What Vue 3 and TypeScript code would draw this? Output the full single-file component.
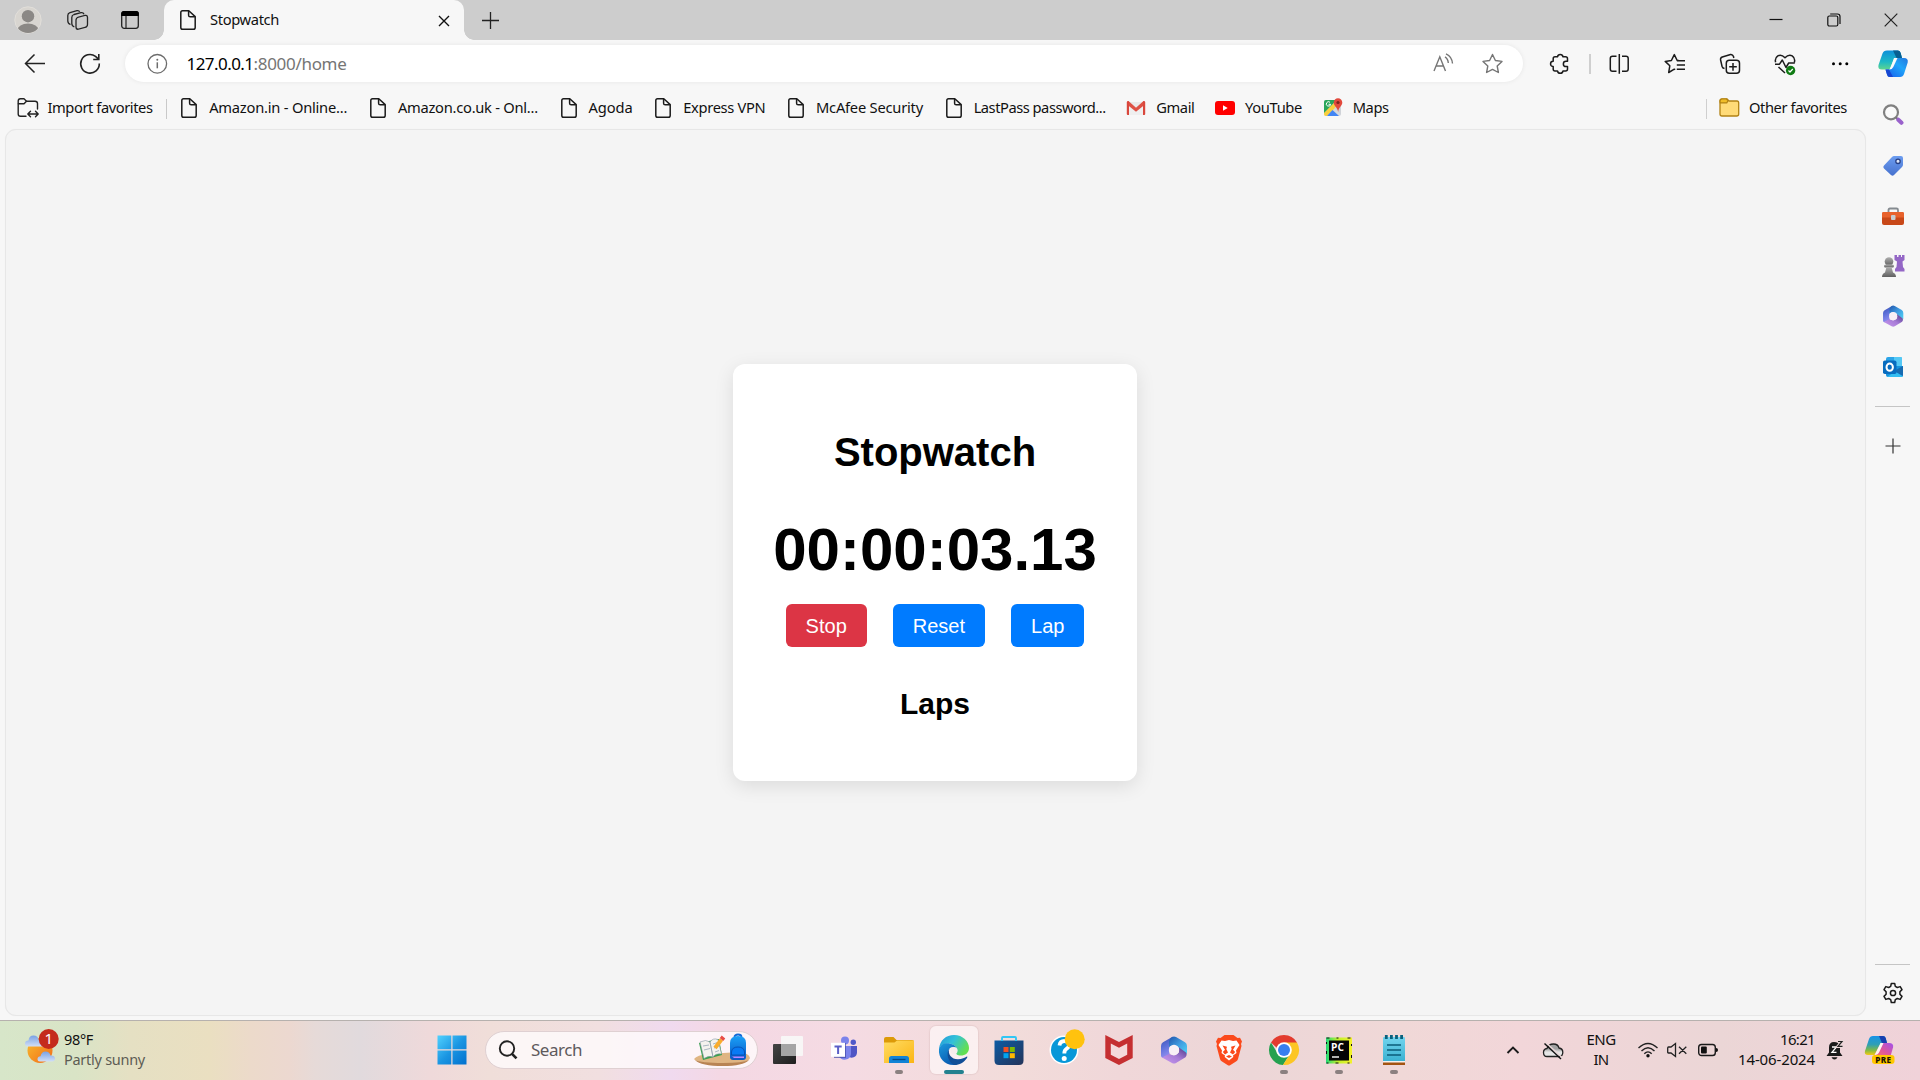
<script setup lang="ts">
import type { Directive } from 'vue'

interface Favorite {
  icon: string
  label: string
  width: number
}

interface TaskApp {
  icon: string
  state: string
}

// Tracks a label so that it takes exactly the given width in pixels.
const vFit: Directive<HTMLElement, number> = {
  mounted(el, { value }) {
    el.style.letterSpacing = '0px'
    const natural = el.getBoundingClientRect().width
    const count = (el.textContent ?? '').trim().length
    el.style.letterSpacing = `${((value - natural) / count).toFixed(3)}px`
  },
}

const favorites: Favorite[] = [
  { icon: 'doc', label: 'Amazon.in - Online...', width: 138 },
  { icon: 'doc', label: 'Amazon.co.uk - Onl...', width: 140 },
  { icon: 'doc', label: 'Agoda', width: 44 },
  { icon: 'doc', label: 'Express VPN', width: 82 },
  { icon: 'doc', label: 'McAfee Security', width: 107 },
  { icon: 'doc', label: 'LastPass password...', width: 132 },
  { icon: 'gmail', label: 'Gmail', width: 38 },
  { icon: 'youtube', label: 'YouTube', width: 57 },
  { icon: 'maps', label: 'Maps', width: 36 },
]

const sidebar: string[] = ['lens', 'tag', 'toolbox', 'games', 'm365', 'outlook']

const apps: TaskApp[] = [
  { icon: 'teams', state: '' },
  { icon: 'explorer', state: 'open' },
  { icon: 'edge', state: 'active' },
  { icon: 'store', state: '' },
  { icon: 'help', state: '' },
  { icon: 'mcafee', state: '' },
  { icon: 'office', state: '' },
  { icon: 'brave', state: '' },
  { icon: 'chrome', state: 'open' },
  { icon: 'pycharm', state: 'open' },
  { icon: 'notepad', state: 'open' },
]

const hexagon = (id: string): string => `
  <defs>
    <linearGradient id="${id}a" x1="0" y1="0" x2="0.3" y2="1"><stop offset="0" stop-color="#3a4fb0"/><stop offset=".5" stop-color="#5b6fd8"/><stop offset="1" stop-color="#8f8df0"/></linearGradient>
    <linearGradient id="${id}b" x1="0" y1="0" x2="1" y2="1"><stop offset="0" stop-color="#1f55ac"/><stop offset=".5" stop-color="#3f9be0"/><stop offset="1" stop-color="#4fd3f5"/></linearGradient>
    <linearGradient id="${id}c" x1="0" y1="1" x2="1" y2="0"><stop offset="0" stop-color="#c99af0"/><stop offset=".5" stop-color="#a77bd6"/><stop offset="1" stop-color="#4c3a88"/></linearGradient>
  </defs>
  <path d="M15 2.500 L5 8.300 Q3 9.400 3 12 V21.500 Q3 23.300 4.500 23.800 L11.500 21 V10.500 Q11.500 6 15 2.500Z" fill="url(#${id}a)"/>
  <path d="M14 3 Q16 1.800 18 3 L27 8.200 Q29 9.400 29 12 V20 L21 14 L16 10.800 L11 13 V8.500 Q11 5 14 3Z" fill="url(#${id}b)"/>
  <path d="M4 23.500 L11 20 L16 21.500 L21 18.500 V13.500 L28 18.500 Q29.500 20.500 27.500 23.300 L18 29 Q16 30 14 29Z" fill="url(#${id}c)"/>
  <circle cx="16" cy="16" r="5.200" fill="#f8f0f6"/>`

const art: Record<string, string> = {
  doc: `<g fill="none" stroke="#1b1b1b" stroke-width="1.500" stroke-linejoin="round"><path d="M6.500 2.800 H12.800 L19.200 8.600 V19.500 Q19.200 21.300 17.400 21.300 H6.600 Q4.800 21.300 4.800 19.500 V4.500 Q4.800 2.800 6.500 2.800Z"/><path d="M12.600 3 V7.200 Q12.600 8.800 14.200 8.800 H19"/></g>`,
  importer: `<g fill="none" stroke="#222" stroke-width="1.400" stroke-linejoin="round" stroke-linecap="round"><path d="M10 20.200 H4.500 Q2.200 20.200 2.200 18 V5 Q2.200 2.800 4.400 2.800 H8 L10.500 5.200 H19 Q21.500 5.200 21.500 7.600 V13"/><path d="M2.400 7.800 H8 L10.500 5.200 M12 18 H22 M14.500 15.300 L11.800 18 L14.500 20.700 M19.500 15.300 L22.200 18 L19.500 20.700"/></g>`,
  gmail: `<path d="M3 6 H21 V19 H3Z" fill="#e9e9e9"/><path d="M5 9.500 V19 H19 V9.500 L12 15Z" fill="#efefef"/><path d="M3 5.500 L4.500 5 L12 11.800 L19.500 5 L21 5.500 V8.500 L12 15.800 L3 8.500Z" fill="#de5145"/><path d="M2.800 6 Q3.500 5 5 5.500 V19 H3.800 Q2.800 19 2.800 18Z M21.200 6 Q20.500 5 19 5.500 V19 H20.200 Q21.200 19 21.200 18Z" fill="#d9473c"/>`,
  youtube: `<rect x="2" y="5" width="20" height="14" rx="3" fill="#f00"/><path d="M10 9.300 L14.700 12 L10 14.700Z" fill="#fff"/>`,
  maps: `<rect x="3" y="4" width="17" height="16" rx="2" fill="#d6d9dd"/><path d="M3 6 Q3 4 5 4 H16 L3 17.500Z" fill="#29a65a"/><path d="M3 17 L15 5 L18 8 L6 20 H5 Q3 20 3 18Z" fill="#f9cf3e"/><path d="M6 20 L11.500 14 L18 20Z" fill="#4285f4"/><path d="M13.500 12 L20 19 V8Z" fill="#d0d3d8"/><path d="M9 6.300 A2.200 2.200 0 1 0 9.700 8.300 H7.600" fill="none" stroke="#fff" stroke-width="1"/><path d="M17 2.200 A4.300 4.300 0 0 1 21.300 6.500 C21.300 10 17.500 11 17.200 16 C16.500 11 12.700 10 12.700 6.500 A4.300 4.300 0 0 1 17 2.200Z" fill="#e2493c"/><circle cx="17" cy="6.500" r="1.600" fill="#7c241c"/>`,
  lens: `<g transform="translate(4 4)"><circle cx="10" cy="9.300" r="7" fill="#fafafa" stroke="#808080" stroke-width="2.200"/><path d="M14.800 14.300 L17 16.500" stroke="#777" stroke-width="2"/><path d="M17.300 16.800 L20.500 19.700" stroke="#9a62cc" stroke-width="4.200" stroke-linecap="round"/></g>`,
  tag: `<defs><linearGradient id="tg" x1="0" y1="0" x2="0" y2="1"><stop offset="0" stop-color="#6c9df0"/><stop offset="1" stop-color="#4671ce"/></linearGradient></defs><path d="M17 6 H24 Q26 6 26 8 V14.500 Q26 16 25 17 L17 25 Q15.500 26.500 14 25 L7 18.500 Q5.500 17 7 15.500 L15 7 Q16 6 17 6Z" fill="url(#tg)"/><circle cx="21" cy="11.300" r="2.200" fill="#dce7fb" stroke="#273f83" stroke-width="1.300"/>`,
  toolbox: `<path d="M11.500 11.500 V9 Q11.500 7.500 13 7.500 H19.500 Q21 7.500 21 9 V11.500" fill="none" stroke="#858b90" stroke-width="1.800"/><rect x="5" y="11" width="22" height="13" rx="2" fill="#c84819"/><path d="M5 12.500 Q5 11 6.500 11 H25.500 Q27 11 27 12.500 V16.500 H5Z" fill="#e8622c"/><rect x="14" y="14" width="4.500" height="5" rx="1" fill="#c6cdd2"/>`,
  games: `<defs><linearGradient id="gm" x1="0" y1="0" x2="0" y2="1"><stop offset="0" stop-color="#b0b0b0"/><stop offset="1" stop-color="#606060"/></linearGradient></defs><path d="M17.500 5 H20 V7 H21.500 V5 H24 V7 H25 V5 H27.500 V10 L25.500 11.500 L26 17 L27.500 19 V21.500 H18 V19 L19.500 17 L20 11.500 L17.500 10Z" fill="#9467c6"/><g fill="url(#gm)"><circle cx="12" cy="11.500" r="4.300"/><rect x="7" y="14.500" width="10" height="3" rx="1.500"/><path d="M9.500 17 H14.500 L16 22.500 Q19 23.500 19 27 H5 Q5 23.500 8 22.500Z"/></g>`,
  m365: `<g transform="translate(3.700 3.700) scale(.78)">${hexagon('ms')}</g>`,
  outlook: `<path d="M9 8 Q9 6 11 6 H23 Q25 6 25 8 V16 H9Z" fill="#2ba4e8"/><path d="M17 6 H24 Q25 6 25 7 V16 H17Z" fill="#53c8f5"/><path d="M9 15 H26 V23.500 Q26 26 24 26 H11 Q9 26 9 24Z" fill="#1793dd"/><path d="M26 15 L17 20 L26 25Z" fill="#176bb1"/><path d="M10 26 L18 20.500 L26 25.500 Q25.500 26 24 26Z" fill="#34bdf2"/><rect x="6" y="9.500" width="13.500" height="13.500" rx="1.800" fill="#086cbf"/><ellipse cx="12.700" cy="16.200" rx="3.200" ry="3.600" fill="none" stroke="#fff" stroke-width="2"/>`,
  teams: `<circle cx="17" cy="6.500" r="4" fill="#7b83eb"/><circle cx="25.300" cy="8.300" r="2.700" fill="#5059c9"/><path d="M20 12 H29 V18.500 A5.200 5.200 0 0 1 20 22Z" fill="#4f55c5"/><path d="M11 12 H23 V20 A6.300 6.300 0 0 1 11 22Z" fill="#7b83eb"/><rect x="6" y="9" width="12" height="15" fill="#4148a7" opacity=".7"/><rect x="3" y="8.800" width="14" height="14" fill="#fff"/><path d="M6.500 12.500 H13.700 M10.100 12.500 V20" stroke="#5b5fc7" stroke-width="2"/>`,
  explorer: `<defs><linearGradient id="ex" x1="0" y1="0" x2="1" y2="1"><stop offset="0" stop-color="#ffdc63"/><stop offset="1" stop-color="#fbb514"/></linearGradient></defs><path d="M1 5 Q1 3 3 3 H10.500 L13.500 6 H29 Q31 6 31 8 V14 H1Z" fill="#dc9a08"/><path d="M1 8.500 H11.500 L14 6.500 H31 V29 H1Z" fill="url(#ex)"/><path d="M6 29 V24.500 Q6 22 8.500 22 H23.500 Q26 22 26 24.500 V29Z" fill="#1283d6"/><path d="M9.500 25.500 H22.500" stroke="#064a85" stroke-width="1.300"/>`,
  edge: `<defs><linearGradient id="ea" x1="0" y1="0" x2="1" y2=".5"><stop offset="0" stop-color="#2396d8"/><stop offset=".5" stop-color="#33c1d9"/><stop offset="1" stop-color="#62df52"/></linearGradient><linearGradient id="eb" x1="0" y1="0" x2=".5" y2="1"><stop offset="0" stop-color="#1c9add"/><stop offset="1" stop-color="#0a5cb1"/></linearGradient></defs><path d="M1 15 C2 6 8 1 16 1 C25 1 31 7.500 31 14 C31 19 27 21.500 23 21.500 C19 21.500 17.500 20 18.500 18.500 C20 16 19 12.500 14.500 10.500 C9 8.300 3 10 1 15Z" fill="url(#ea)"/><path d="M1 15 C2.500 10.500 7 8.500 12 9.700 C18 11 20 14.500 18.500 18.200 C18.500 13.500 14 11.700 11.500 14.500 C8 18.500 12 28.500 18.500 30.700 C8 32.500 0 25 1 15Z" fill="url(#eb)"/><path d="M11.500 14.500 C9 20 14 25.500 20 25.300 C24 25.200 27 23.500 28.500 22.700 C29.300 22.300 29.700 23 29 24 C26 28.500 21.500 31 16.500 31 C10 28.500 7.500 19 11.500 14.500Z" fill="#114f97"/><circle cx="16" cy="16.500" r="3.600" fill="#f6edec"/>`,
  store: `<defs><linearGradient id="st" x1="0" y1="0" x2="1" y2="1"><stop offset="0" stop-color="#0c5ba4"/><stop offset="1" stop-color="#243459"/></linearGradient></defs><path d="M1.500 6.500 H30.500 V26.500 Q30.500 31 26 31 H6 Q1.500 31 1.500 26.500Z" fill="url(#st)"/><path d="M9 7 V4 Q9 3 10 3 H22 Q23 3 23 4 V7" fill="none" stroke="#32c6f4" stroke-width="1.900"/><path d="M10.500 13 H15.500 V18 H10.500Z" fill="#f25022"/><path d="M16.800 13 H21.800 V18 H16.800Z" fill="#7fba00"/><path d="M10.500 19.200 H15.500 V24.200 H10.500Z" fill="#00a4ef"/><path d="M16.800 19.200 H21.800 V24.200 H16.800Z" fill="#ffb900"/>`,
  help: `<circle cx="16" cy="16" r="14.500" fill="#fff"/><circle cx="16" cy="16" r="13" fill="#0797d8"/><path d="M11.500 11.500 Q12 7 16.500 7 Q21 7 21 11 Q21 13.300 18.500 14.800 Q16.300 16.300 16.300 19.500" fill="none" stroke="#fff" stroke-width="3.800"/><circle cx="16.200" cy="24.500" r="2.500" fill="#fff"/><circle cx="26.700" cy="5.200" r="10" fill="#ffc20e"/>`,
  mcafee: `<path d="M2.300 1 L16 8 L29.700 1 V24 L16 31 L2.300 24Z" fill="#c52f31"/><path d="M7.800 9.500 L16 13.800 L24.200 9.500 V20.700 L16 25 L7.800 20.700Z" fill="#f4d9da"/>`,
  office: hexagon('mt'),
  brave: `<path d="M7.500 4 L11.500 1 H20.500 L24.500 4 L27 3.800 L29 7.500 L28 10 L28.500 12 L25 25 Q24.500 26.500 23 27.500 L17.500 31 Q16 32 14.500 31 L9 27.500 Q7.500 26.500 7 25 L3.500 12 L4 10 L3 7.500 L5 3.800Z" fill="#fb4a1c"/><path d="M8.500 6.500 L12 7 L16 6 L20 7 L23.500 6.500 L26.500 11 L23 16.500 L23.500 19 L20 21.500 L20.300 23 L16 26.500 L11.700 23 L12 21.500 L8.500 19 L9 16.500 L5.500 11Z" fill="#fff"/><path d="M9.500 11.500 L14 12.700 L13.300 15 L15 18.500 L12 20.500 L9.800 18 L12 15.800Z M22.500 11.500 L18 12.700 L18.700 15 L17 18.500 L20 20.500 L22.200 18 L20 15.800Z M13 22.500 L16 21 L19 22.500 L16 24Z" fill="#fb4a1c"/>`,
  chrome: `<path d="M3 8.500 A15 15 0 0 1 29 8.500 L22 16 L16 9 L9 14Z" fill="#e33b2e"/><path d="M3 8.500 A15 15 0 0 0 15 31 L22.300 19.500 L16 23 L9.700 19.500Z" fill="#25a150"/><path d="M29 8.500 A15 15 0 0 1 15 31 L22.300 19.500 V12 L16 8.500Z" fill="#fcc624"/><circle cx="16" cy="16" r="7.800" fill="#fff"/><circle cx="16" cy="16" r="6" fill="#377fee"/>`,
  pycharm: `<defs><linearGradient id="py" x1="0" y1="0" x2="1" y2="0"><stop offset="0" stop-color="#20d978"/><stop offset=".45" stop-color="#bff02b"/><stop offset="1" stop-color="#f4f12b"/></linearGradient></defs><rect x="3" y="3.500" width="26" height="26" fill="url(#py)"/><path d="M3.500 4 H28.500 V29 H3.500Z" fill="none" stroke="#111" stroke-width="1" stroke-dasharray="3 7 2 9"/><rect x="6" y="6.500" width="20" height="20" fill="#050505"/><path d="M9 23 H16" stroke="#fff" stroke-width="1.400"/><text x="8" y="16.700" font-family="Open Sans, Noto Sans, sans-serif" font-weight="700" font-size="10.200" fill="#fff">PC</text>`,
  notepad: `<defs><linearGradient id="np" x1="0" y1="0" x2="0" y2="1"><stop offset="0" stop-color="#73d4ee"/><stop offset="1" stop-color="#3bb2d2"/></linearGradient></defs><rect x="5" y="27" width="22" height="4" fill="#a35311"/><rect x="5" y="25" width="22" height="3.500" fill="#f4f0ee"/><path d="M5 4 Q5 3 6 3 H26 Q27 3 27 4 V27 H5Z" fill="url(#np)"/><path d="M9 11 H23 M9 16 H23 M9 21 H23" stroke="#0b5c79" stroke-width="1.600"/><path d="M8.300 1 V5 M13.400 1 V5 M18.500 1 V5 M23.600 1 V5" stroke="#09617d" stroke-width="2.800"/>`,
}
</script>

<template>
  <div class="screen">
    <header class="titlebar">
      <svg class="avatar" width="28" height="28" viewBox="0 0 28 28">
        <defs><clipPath id="av"><circle cx="14" cy="14" r="13" /></clipPath></defs>
        <circle cx="14" cy="14" r="13.2" fill="#d8d5d0" stroke="#e2dfda" stroke-width="1" />
        <g clip-path="url(#av)" fill="#8b8885"><circle cx="14" cy="10.2" r="6.2" /><ellipse cx="14" cy="24" rx="10.500" ry="6.500" /></g>
      </svg>
      <svg class="spaces" width="24" height="24" viewBox="0 0 24 24" fill="none" stroke="#242424" stroke-width="1.300" stroke-linejoin="round">
        <rect x="10" y="8" width="11.500" height="12" rx="2.500" transform="skewY(-14) translate(0 4.200)" />
        <path d="M8.300 18.800 Q5.800 18 5.800 15.500 V9.500 Q5.800 7.200 8 6.500 L15 4.600 Q17.300 4.200 18 6.200" />
        <path d="M4.500 16.500 Q1.800 15.500 1.800 13 V7.500 Q1.800 5.300 4 4.600 L11 2.600 Q13 2.300 13.700 3.700" />
      </svg>
      <svg class="tabmenu" width="24" height="24" viewBox="0 0 24 24">
        <rect x="3.700" y="3.700" width="16.600" height="16.600" rx="2.500" fill="none" stroke="#222" stroke-width="1.300" />
        <path d="M3.200 8 V5.500 Q3.200 3 5.700 3 H18.300 Q20.800 3 20.800 5.500 V8Z" fill="#000" /><path d="M8 8 V20" stroke="#222" stroke-width="1.200" />
      </svg>
      <div class="tab">
        <svg width="24" height="24" viewBox="0 0 24 24" v-html="art.doc"></svg>
        <span class="label" v-fit="69">Stopwatch</span>
        <svg class="tabclose" width="12" height="12" viewBox="0 0 12 12"><path d="M1 1 L11 11 M11 1 L1 11" stroke="#111" stroke-width="1.400" /></svg>
      </div>
      <svg class="newtab" width="19" height="19" viewBox="0 0 19 19"><path d="M9.500 1 V18 M1 9.500 H18" stroke="#222" stroke-width="1.300" /></svg>
      <div class="winbtns">
        <svg width="14" height="14" viewBox="0 0 14 14"><path d="M.5 6.500 H13.500" stroke="#111" stroke-width="1.200" /></svg>
        <svg width="14" height="14" viewBox="0 0 14 14" fill="none" stroke="#111" stroke-width="1.200"><rect x=".8" y="3" width="10" height="10" rx="1.500" /><path d="M3.200 1 H10.500 Q13 1 13 3.500 V11" /></svg>
        <svg width="14" height="14" viewBox="0 0 14 14"><path d="M.7 .7 L13.300 13.300 M13.300 .7 L.7 13.300" stroke="#222" stroke-width="1.200" /></svg>
      </div>
    </header>

    <nav class="toolbar">
      <svg class="back" width="24" height="24" viewBox="0 0 24 24" fill="none" stroke="#222" stroke-width="1.500"><path d="M22 11.500 H2.500 M11.500 2.500 L2.500 11.500 L11.500 20.500" /></svg>
      <svg class="reload" width="24" height="24" viewBox="0 0 24 24" fill="none" stroke="#222" stroke-width="1.600"><path d="M21.300 11.500 A9.300 9.300 0 1 1 17.500 4.300 L20.600 7.200 M20.800 2 V7.500 H15.200" /></svg>
      <div class="address">
        <svg width="24" height="24" viewBox="0 0 24 24"><circle cx="12.300" cy="11.800" r="9.300" fill="none" stroke="#6c6c6c" stroke-width="1.300" /><path d="M12.300 10.300 V16.300" stroke="#6c6c6c" stroke-width="1.500" /><circle cx="12.300" cy="7.800" r="1" fill="#6c6c6c" /></svg>
        <span class="url"><span v-fit="67">127.0.0.1</span><span class="dim" v-fit="93">:8000/home</span></span>
        <svg class="read" width="24" height="24" viewBox="0 0 24 24" fill="none" stroke="#757575" stroke-width="1.400"><path d="M3 19 L8.800 4.800 L14.500 19 M5 14 H12.700 M14 4.800 Q17 6.500 17.300 11 M15 1.800 Q21 4.500 21.500 11.500" /></svg>
        <svg class="star" width="24" height="24" viewBox="0 0 24 24" fill="none" stroke="#757575" stroke-width="1.400" stroke-linejoin="round"><path d="M12.500 2.500 L15.400 8.500 L22 9.400 L17.200 14 L18.400 20.500 L12.500 17.400 L6.600 20.500 L7.800 14 L3 9.400 L9.600 8.500Z" /></svg>
      </div>
      <svg class="ext" width="24" height="24" viewBox="0 0 24 24" fill="none" stroke="#1b1b1b" stroke-width="1.500" stroke-linejoin="round"><path d="M9.500 4.800 A2.800 2.800 0 0 1 15 4.800 H17.500 Q19.500 4.800 19.500 6.800 V9.300 H18 A2.600 2.600 0 0 0 18 14.600 H19.500 V17 Q19.500 19 17.500 19 H15 A2.800 2.800 0 0 1 9.500 19 H7 Q5.200 19 5.200 17 V14.600 A2.600 2.600 0 0 1 5.200 9.300 V6.800 Q5.200 4.800 7 4.800Z" /></svg>
      <i class="bar"></i>
      <svg class="split" width="24" height="24" viewBox="0 0 24 24" fill="none" stroke="#1b1b1b" stroke-width="1.500"><path d="M12.300 2 V21.700 M9.500 4.200 H5.500 Q3.300 4.200 3.300 6.400 V17 Q3.300 19.300 5.500 19.300 H9.500 M15 4.200 H19 Q21.200 4.200 21.200 6.400 V17 Q21.200 19.300 19 19.300 H15" /></svg>
      <svg class="favs" width="24" height="24" viewBox="0 0 24 24" fill="none" stroke="#1b1b1b" stroke-width="1.500" stroke-linejoin="round"><path d="M15.800 8.500 H14.200 L11.300 2.600 L8.400 8.500 L2.200 9.400 L6.800 13.800 L5.700 20.500 L11.300 17.200 L12.200 17.700 M13.800 8.700 H22 M13.800 13 H22 M13.800 17.300 H22" /></svg>
      <svg class="coll" width="24" height="24" viewBox="0 0 24 24" fill="none" stroke="#1b1b1b" stroke-width="1.500"><rect x="8.300" y="8.300" width="13.200" height="13" rx="3" /><path d="M15 11 V18.700 M11.200 14.800 H18.800 M6.500 16.500 Q4.500 16.200 4 14.200 L2.600 8 Q2.200 5.800 4.300 5 L12.500 2.500 Q14.700 2.200 15.500 4.500 L15.800 6" /></svg>
      <svg class="heart" width="24" height="24" viewBox="0 0 24 24" fill="none" stroke="#1b1b1b" stroke-width="1.500" stroke-linejoin="round"><path d="M2.600 10.300 Q1.500 6 4.800 3.800 Q8.500 2 12 5.800 Q15.500 2 19.200 3.800 Q22.500 6 21.400 10.300 M2 12.200 H6.500 L9.300 8 L13 15.500 L15.700 11 H21.800 M5.500 15 L12 21" /><circle cx="17.600" cy="18.500" r="4.700" fill="#0f7b13" stroke="none" /><path d="M15.500 18.500 L17 20 L19.800 17" stroke="#fff" stroke-width="1.200" /></svg>
      <svg class="more" width="24" height="24" viewBox="0 0 24 24"><circle cx="5.500" cy="11.700" r="1.500" /><circle cx="12.200" cy="11.700" r="1.500" /><circle cx="18.800" cy="11.700" r="1.500" /></svg>
      <svg class="copilot" width="32" height="32" viewBox="0 0 32 32">
        <defs>
          <linearGradient id="cpa" x1="0" y1="0" x2="0" y2="1"><stop offset="0" stop-color="#0d8fd9" /><stop offset=".6" stop-color="#1eb9c5" /><stop offset="1" stop-color="#5ed58e" /></linearGradient>
          <linearGradient id="cpb" x1="0" y1="1" x2="1" y2="0"><stop offset="0" stop-color="#165bea" /><stop offset=".6" stop-color="#20a5fa" /><stop offset="1" stop-color="#2476dc" /></linearGradient>
        </defs>
        <path d="M14 2.500 H21 Q23 2.500 23.700 5 L25 10 H17 L13 21.500 H5 Q.5 21.500 1.500 17 L5.500 5.500 Q6.500 2.500 10 2.500Z" fill="url(#cpa)" />
        <path d="M16 2.500 H21 Q23 2.500 23.700 5 L25 10 H19.500Z" fill="#075f91" />
        <path d="M19 10 H27 Q31.500 10 30.700 14.500 L27 26 Q26 29 23 29 H13 Q10.500 29 10 26.500 L8.500 21.500 H11.500 Q14.500 21.500 15.500 18Z" fill="url(#cpb)" />
        <path d="M8.500 21.500 H12 L16 29 H13 Q10.500 29 10 26.500Z" fill="#1747d1" /><path d="M17.500 10 H20.500 L16.300 19 Q15 21.500 12.500 21.500Z" fill="#fafafa" />
      </svg>
    </nav>

    <div class="middle">
      <div class="content">
        <div class="favorites">
          <div class="fav"><svg width="24" height="24" viewBox="0 0 24 24" v-html="art.importer"></svg><span v-fit="105">Import favorites</span></div>
          <i class="favsep"></i>
          <div v-for="f in favorites" :key="f.label" class="fav">
            <svg width="24" height="24" viewBox="0 0 24 24" v-html="art[f.icon]"></svg><span v-fit="f.width">{{ f.label }}</span>
          </div>
          <div class="others">
            <svg width="24" height="24" viewBox="0 0 24 24"><path d="M3 5 Q3 2.800 5 2.800 H10 L12 5 H20 Q21.700 5 21.700 7 V18 Q21.700 20 19.700 20 H5 Q3 20 3 18Z" fill="#ffdb78" stroke="#b28314" stroke-width="1.300" /><path d="M3 5.500 Q3 3 5 3 H9.500 L11 4.700 L9.800 6.900 H3.300Z" fill="#f0bd28" stroke="#b28314" stroke-width="1.200" /></svg>
            <span v-fit="98">Other favorites</span>
          </div>
        </div>
        <main class="page">
          <section class="card">
            <h1>Stopwatch</h1>
            <div class="time">00:00:03.13</div>
            <div class="actions"><button class="stop">Stop</button><button>Reset</button><button>Lap</button></div>
            <h2>Laps</h2>
          </section>
        </main>
      </div>
      <aside class="sidebar">
        <div v-for="s in sidebar" :key="s" class="slot"><svg width="32" height="32" viewBox="0 0 32 32" v-html="art[s]"></svg></div>
        <i class="line first"></i>
        <svg class="add" width="16" height="16" viewBox="0 0 16 16"><path d="M8 .5 V15.500 M.5 8 H15.500" stroke="#333" stroke-width="1.200" /></svg>
        <i class="line last"></i>
        <svg class="gear" width="24" height="24" viewBox="0 0 24 24" fill="none" stroke="#1b1b1b" stroke-width="1.500" stroke-linejoin="round"><path d="M10.300 2.500 H13.700 L14.300 5.400 L16.300 6.500 L19.200 5.600 L21 8.600 L18.900 10.700 V13.300 L21 15.400 L19.200 18.400 L16.300 17.500 L14.300 18.600 L13.700 21.500 H10.300 L9.700 18.600 L7.700 17.500 L4.800 18.400 L3 15.400 L5.100 13.300 V10.700 L3 8.600 L4.800 5.600 L7.700 6.500 L9.700 5.400Z" /><circle cx="12" cy="12" r="2.600" /></svg>
      </aside>
    </div>

    <footer class="taskbar">
      <div class="weather">
        <svg width="38" height="38" viewBox="0 0 38 38">
          <defs><linearGradient id="sun" x1="0" y1="0" x2="1" y2="1"><stop offset="0" stop-color="#f8bd31" /><stop offset="1" stop-color="#f26b16" /></linearGradient><linearGradient id="cl" x1="0" y1="0" x2="0" y2="1"><stop offset="0" stop-color="#79a2e4" /><stop offset="1" stop-color="#d2dff7" /></linearGradient></defs>
          <circle cx="17" cy="21.500" r="12.500" fill="url(#sun)" />
          <path d="M5 17.500 Q2 17.500 2 14.500 Q2 11.500 5.500 11.500 Q6 6.500 10.500 6.500 Q15 6.500 16 11.500 L20 13.500 V17.500Z" fill="url(#cl)" />
          <path d="M17 32.500 Q14.500 32.500 14.500 30 Q14.500 27.500 17.500 27.200 Q18.500 22.500 22.500 22.500 Q26.500 22.500 27.500 26.500 Q32 26.500 32 29.500 Q32 32.500 29 32.500Z" fill="url(#cl)" />
          <circle cx="25.700" cy="10" r="10" fill="#c42b1c" />
          <text x="25.900" y="15.400" text-anchor="middle" font-family="Noto Sans, sans-serif" font-size="15" fill="#fff">1</text>
        </svg>
        <div class="wtext"><span v-fit="29">98°F</span><span class="soft" v-fit="81">Partly sunny</span></div>
      </div>
      <svg class="start" width="30" height="30" viewBox="0 0 30 30"><defs><linearGradient id="win" gradientUnits="userSpaceOnUse" x1="0" y1="0" x2="28" y2="28"><stop offset="0" stop-color="#53d3ff" /><stop offset=".55" stop-color="#1a95e2" /><stop offset="1" stop-color="#0474d0" /></linearGradient></defs><path d="M.5 .5 H14.300 V14.300 H.5Z M15.500 .5 H29.500 V14.300 H15.500Z M.5 15.500 H14.300 V29.500 H.5Z M15.500 15.500 H29.500 V29.500 H15.500Z" fill="url(#win)" /></svg>
      <div class="search">
        <svg width="20" height="20" viewBox="0 0 20 20"><circle cx="9" cy="8.500" r="7.200" fill="none" stroke="#222" stroke-width="1.900" /><path d="M14 13.800 L18.500 18.300" stroke="#222" stroke-width="2.600" /></svg>
        <span v-fit="51">Search</span>
        <svg class="school" width="58" height="34" viewBox="0 0 58 34">
          <defs><linearGradient id="bp" x1="0" y1="0" x2="0" y2="1"><stop offset="0" stop-color="#1aa0f7" /><stop offset="1" stop-color="#0a56c5" /></linearGradient></defs>
          <path d="M1 26 Q4 22 15 21 L46 19 Q56 20 57 25 Q55 31 30 31 Q5 31 1 26Z" fill="#dfb583" /><path d="M2 27 Q8 33 30 33 Q50 33 56 27 Q50 30 30 30 Q8 30 2 27Z" fill="#b88454" />
          <path d="M6 10 L26 6 L29 22 L10 27Z" fill="#36a04c" /><path d="M7 9 Q13 6 17 9 L20 24 Q16 22 11 25.500Z M17 9 Q20 4.500 25 6.500 L28.500 21 Q23 20 20 24Z" fill="#f4f2ee" stroke="#8797a5" stroke-width=".6" />
          <path d="M10 13 L16 12 M11 17 L17 15.500 M20 11 L24.500 9.500 M21 15 L25.500 13.500 M22 19 L26 17.500" stroke="#a9b6c2" stroke-width="1" /><path d="M22 15 L28.500 6.500" stroke="#f9ac2e" stroke-width="4" /><path d="M28.500 6.500 L30.500 4" stroke="#e84c45" stroke-width="4.500" />
          <path d="M41.500 4 Q41.500 1.500 45 1.500 Q48.500 1.500 48.500 4" fill="none" stroke="#126bd7" stroke-width="1.800" /><path d="M37 10 Q37 3 45 3 Q53 3 53 10 V24 Q53 27 50 27 H40 Q37 27 37 24Z" fill="url(#bp)" /><path d="M38.500 22 V19 Q39 14 45 14 Q51 14 51.500 19 V22Z" fill="#087af4" stroke="#0647a6" stroke-width=".8" /><path d="M39 23.500 H51 V25 H41Z" fill="#b987ff" />
        </svg>
      </div>
      <svg class="tasks" width="32" height="32" viewBox="0 0 32 32"><defs><linearGradient id="tv" x1="0" y1="0" x2="1" y2="1"><stop offset="0" stop-color="#444" /><stop offset="1" stop-color="#1e1e1e" /></linearGradient></defs><rect x="1" y="10" width="23" height="20" rx="1" fill="url(#tv)" /><rect x="9" y="2" width="22" height="20" rx="1" fill="#f7f7f7" opacity=".93" /><path d="M9 10 H24 V22 H9Z" fill="#a5a5a5" /></svg>
      <div class="apps">
        <div v-for="a in apps" :key="a.icon" class="app" :class="a.state">
          <svg width="32" height="32" viewBox="0 0 32 32" v-html="art[a.icon]"></svg>
        </div>
      </div>
      <div class="tray">
        <svg class="chev" width="14" height="10" viewBox="0 0 14 10"><path d="M1.500 8 L7 2.500 L12.500 8" fill="none" stroke="#1b1b1b" stroke-width="1.900" /></svg>
        <svg class="cloud" width="24" height="20" viewBox="0 0 24 20"><defs><linearGradient id="oc" x1="0" y1="0" x2="0" y2="1"><stop offset=".4" stop-color="#a2a2a2" /><stop offset=".65" stop-color="#e6e6e6" /></linearGradient></defs><path d="M6 16.500 Q2.500 16.500 2.500 12.500 Q2.500 9 6 8.500 Q7.500 4 12.500 4 Q17 4 18 8 Q21.800 8.500 21.800 12.300 Q21.800 16.500 18 16.500Z" fill="url(#oc)" stroke="#222" stroke-width="1.300" /><path d="M4.800 2.500 L21.500 18" stroke="#ead7d8" stroke-width="1.600" /><path d="M3.500 3.500 L20 19" stroke="#111" stroke-width="1.400" /></svg>
        <div class="lang"><span v-fit="29">ENG</span><span v-fit="15">IN</span></div>
        <svg class="wifi" width="22" height="18" viewBox="0 0 22 18" fill="none" stroke="#222" stroke-width="1.400"><path d="M1.500 7 Q11 -2 20.500 7 M4.500 10 Q11 3.500 17.500 10 M7.300 12.700 Q11 9 14.700 12.700" /><circle cx="11" cy="14.700" r="1.700" fill="#111" stroke="none" /></svg>
        <svg class="sound" width="22" height="18" viewBox="0 0 22 18" fill="none" stroke="#222" stroke-width="1.300"><path d="M2.500 6 H5 L9.500 2.500 V15.500 L5 12 H2.500 Q1.700 12 1.700 11 V7 Q1.700 6 2.500 6Z M13 5.700 L20.300 12.700 M20.300 5.700 L13 12.700" /></svg>
        <svg class="battery" width="22" height="18" viewBox="0 0 22 18"><rect x="1.700" y="3.500" width="16.600" height="11" rx="2.800" fill="none" stroke="#1b1b1b" stroke-width="1.400" /><rect x="4" y="5.500" width="5.800" height="7" rx="1" fill="#111" /><path d="M19 7 Q21 7 21 9 Q21 11 19 11Z" fill="#111" /></svg>
        <div class="clock"><span v-fit="35">16:21</span><span v-fit="77">14-06-2024</span></div>
        <svg class="bell" width="20" height="22" viewBox="0 0 20 22"><path d="M1.500 17 L4 13.500 V8.500 Q4 3 9 3 Q14 3 15 7 V13.500 L17.500 17Z" fill="#1b1b1b" /><path d="M6.500 18.300 H12.500 Q11.500 20.500 9.500 20.500 Q7.500 20.500 6.500 18.300Z" fill="#1b1b1b" /><path d="M7 8 H11.500 L7 13.300 H11.500" fill="none" stroke="#fff" stroke-width="1.300" /><path d="M13 2.500 H17 L13 7.300 H17.500" fill="none" stroke="#ead7d8" stroke-width="3.200" /><path d="M13 2.500 H17 L13 7.300 H17.500" fill="none" stroke="#222" stroke-width="1.200" /></svg>
        <svg class="pre" width="32" height="32" viewBox="0 0 32 32">
          <defs><linearGradient id="pa" x1="0" y1="0" x2="0" y2="1"><stop offset="0" stop-color="#1693e8" /><stop offset=".45" stop-color="#2f9fb5" /><stop offset=".75" stop-color="#7fba45" /><stop offset="1" stop-color="#f6ca13" /></linearGradient><linearGradient id="pb" x1="0" y1="1" x2="1" y2="0"><stop offset="0" stop-color="#fb7c63" /><stop offset=".5" stop-color="#df569a" /><stop offset="1" stop-color="#a152ed" /></linearGradient></defs>
          <path d="M10 2 H20 Q22 2 22.700 4 L24 9 H18 L13 21 H5 Q1 21 2 17 L6 5 Q7 2 10 2Z" fill="url(#pa)" /><path d="M16 2 H20 Q22 2 22.700 4 L24 9 H19Z" fill="#173faf" /><path d="M18 9 H26 Q31 9 30 13.500 L27 24 H10 L12 20Z" fill="url(#pb)" /><path d="M17.500 9 H20.500 L16.300 18 Q15 21 11.500 21Z" fill="#fff4f2" />
          <rect x="9" y="21" width="22.500" height="9" rx="3" fill="#ffc800" /><text x="20.300" y="28.600" text-anchor="middle" font-family="Noto Sans, sans-serif" font-size="8.200" font-weight="800" fill="#1a1400" letter-spacing=".4">PRE</text>
        </svg>
      </div>
    </footer>
  </div>
</template>

<style>
body { margin: 0; overflow: hidden; }
</style>

<style scoped>
.screen { width: 1920px; height: 1080px; display: flex; flex-direction: column; background: #f7f7f7; color: #111; font-family: "Noto Sans", "Open Sans", sans-serif; font-size: 14.700px; overflow: hidden; }
svg { display: block; flex: none; overflow: visible; }
span { white-space: nowrap; }

.titlebar { height: 40px; flex: none; background: #cdcdcd; display: flex; align-items: center; padding-left: 14px; }
.spaces { margin-left: 24px; }
.tabmenu { margin-left: 28px; }
.tab { position: relative; width: 300px; height: 40px; margin-left: 22px; box-sizing: border-box; padding-left: 12px; display: flex; align-items: center; background: #f7f7f7; border-radius: 10px 10px 0 0; }
.tab::before, .tab::after { content: ""; position: absolute; bottom: 0; width: 10px; height: 10px; }
.tab::before { left: -10px; background: radial-gradient(circle at 0 0, transparent 9.5px, #f7f7f7 10px); }
.tab::after { right: -10px; background: radial-gradient(circle at 100% 0, transparent 9.5px, #f7f7f7 10px); }
.tab .label { margin-left: 10px; line-height: 38px; height: 40px; }
.tabclose { margin: 1px 14px 0 auto; }
.newtab { margin-left: 17px; }
.winbtns { margin-left: auto; display: flex; gap: 43.500px; padding-right: 22px; }

.toolbar { height: 48px; flex: none; display: flex; align-items: center; padding-left: 23px; }
.reload { margin-left: 31px; }
.address { width: 1398px; height: 37px; box-sizing: border-box; margin: -1px 0 0 23px; padding: 0 19px 0 20px; border-radius: 19px; background: #fff; box-shadow: 0 0 5px rgba(0, 0, 0, 0.07); display: flex; align-items: center; }
.url { margin-left: 17.500px; display: flex; font-size: 17px; line-height: 36px; color: #000; }
.dim { color: #757575; }
.read { margin-left: auto; }
.star { margin-left: 25px; }
.ext { margin-left: 25px; }
.bar { width: 2px; height: 20px; margin-left: 17px; background: #cfcfcf; }
.split { margin-left: 16px; }
.favs { margin-left: 32px; }
.coll, .heart, .more { margin-left: 31px; }
.copilot { margin-left: 25px; }

.middle { flex: 1; display: flex; min-height: 0; }
.content { width: 1866px; flex: none; display: flex; flex-direction: column; }
.favorites { height: 41px; flex: none; display: flex; align-items: center; padding: 0 19px 0 16px; }
.fav { display: flex; align-items: center; height: 41px; margin-right: 18.700px; }
.fav svg, .others svg { margin-top: -1px; }
.fav span, .others span { margin-left: 8px; line-height: 36px; height: 40px; }
.fav:first-child span { margin-left: 7.500px; }
.favsep { width: 1px; height: 20px; margin: 0 10.500px 0 -5.500px; background: #c9c9c9; }
.others { margin-left: auto; height: 20px; display: flex; align-items: center; border-left: 1px solid #cfcfcf; padding-left: 10px; }
.page { width: 1861px; height: 887px; margin-left: 5px; box-sizing: border-box; border: 1px solid #e7e7e7; border-radius: 11px; background: #f4f4f4; box-shadow: 0 0 1px rgba(0, 0, 0, 0.06); display: flex; align-items: center; justify-content: center; }

.card { width: 404px; height: 417px; box-sizing: border-box; margin-right: 1px; padding-top: 65px; background: #fff; border-radius: 12px; box-shadow: 0 5px 19px rgba(0, 0, 0, 0.1); display: flex; flex-direction: column; align-items: center; color: #000; font-family: "Liberation Sans", Arial, sans-serif; }
h1 { margin: 0; font-size: 40px; line-height: 46px; }
.time { margin-top: 40px; font-size: 60px; line-height: 70px; font-weight: 700; }
.actions { margin-top: 19px; display: flex; gap: 26px; }
button { height: 43px; padding: 0 20px; border: 0; border-radius: 6px; background: #007bff; color: #fff; font: 20px/42px "Liberation Sans", Arial, sans-serif; }
.stop { background: #dc3545; }
h2 { margin: 40px 0 0; font-size: 30px; line-height: 34px; }

.sidebar { flex: 1; display: flex; flex-direction: column; align-items: center; padding: 2px 1px 0 0; }
.slot { height: 50.300px; display: flex; align-items: center; }
.slot:nth-child(2) svg { margin-top: 2px; }
.slot:nth-child(3) svg { margin-top: 3px; }
.line { width: 35px; height: 1px; background: #c5c5c5; }
.first { margin-top: 14px; }
.add { margin-top: 31px; }
.last { margin-top: auto; }
.gear { margin: 16px 0 15px; }

.taskbar { height: 60px; flex: none; box-sizing: border-box; border-top: 1px solid #b6b1ae; padding-bottom: 1px; display: flex; align-items: center; background: linear-gradient(90deg, #d7e6c9 0, #d9e4c6 75px, #e5e0c3 130px, #eadfc1 210px, #ecdaca 250px, #ecd8d0 290px, #e6dad8 315px, #e1dadd 360px, #efd9da 430px, #f0ded9 490px, #f1dfe0 600px, #f0daef 670px, #f4d8e4 720px, #f5dbe3 850px, #f2dcda 1010px, #f0d7d9 1120px, #ecd6d7 1250px, #f0d8d7 1400px, #f2d6d9 1520px, #ebd6d6 1720px, #f0d2d9 1920px); }
.weather { width: 437px; flex: none; box-sizing: border-box; padding-left: 23px; display: flex; align-items: center; }
.weather svg { margin-top: -4px; }
.wtext { margin: -3px 0 0 3px; display: flex; flex-direction: column; align-items: flex-start; line-height: 20px; font-size: 14.500px; }
.soft { color: #5d5c54; }
.search { width: 273px; height: 38px; box-sizing: border-box; margin-left: 18px; padding: 0 6px 0 12px; border: 1px solid #dfd0d2; border-radius: 19px; background: rgba(255, 251, 253, 0.8); display: flex; align-items: center; font-size: 17px; color: #5e5a5c; line-height: 36px; }
.search span { margin-left: 13px; height: 37px; }
.school { margin-left: auto; }
.tasks { margin-left: 14px; }
.apps { display: flex; margin-left: 12px; }
.app { position: relative; width: 48px; height: 48px; margin: 0 3.500px; border-radius: 6px; display: flex; align-items: center; justify-content: center; }
.active { background: rgba(255, 251, 250, 0.65); box-shadow: 0 0 1px 1px rgba(190, 160, 160, 0.2); }
.open::after, .active::after { content: ""; position: absolute; bottom: 0; left: 20px; width: 8px; height: 4px; border-radius: 2px; background: #8b8080; }
.active::after { left: 14px; width: 20px; background: #23818f; }
.tray { margin-left: auto; width: 414px; display: flex; align-items: center; }
.cloud { margin-left: 21px; }
.lang, .clock { display: flex; flex-direction: column; line-height: 20px; font-size: 15px; margin-top: -3px; }
.lang { align-items: center; width: 40px; margin-left: 16px; }
.wifi { margin-left: 16px; }
.sound { margin-left: 7px; }
.battery { margin-left: 9px; }
.clock { width: 80px; margin-left: 16px; align-items: flex-end; }
.bell { margin-left: 10px; }
.pre { margin-left: 18px; }
</style>
